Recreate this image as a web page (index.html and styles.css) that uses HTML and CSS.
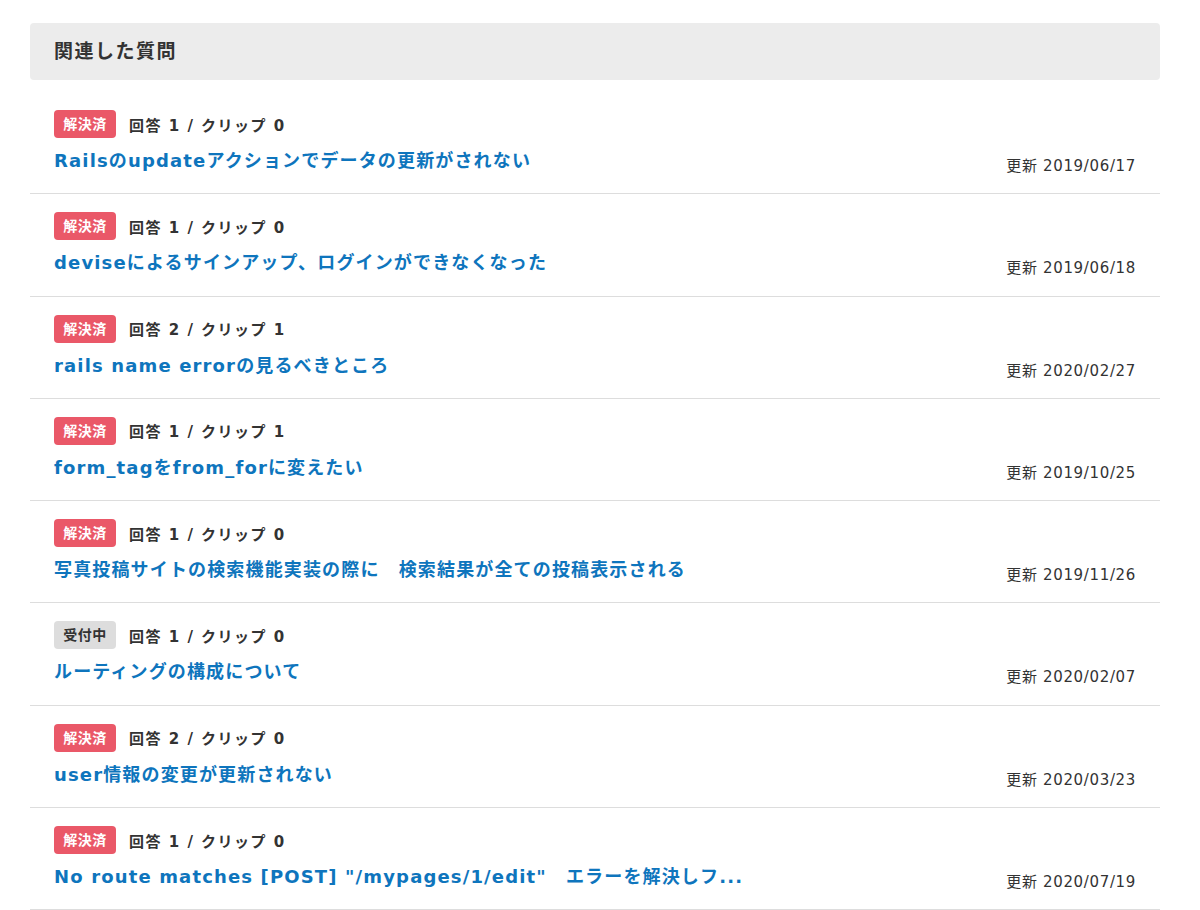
FILE: index.html
```html
<!DOCTYPE html>
<html lang="ja">
<head>
  <meta charset="UTF-8" />
  <meta name="viewport" content="width=device-width, initial-scale=1.0" />
  <title>関連した質問</title>
  <link rel="stylesheet" href="styles.css">
</head>
<body>

<div class="related">
  <h2 class="related-head">関連した質問</h2>

  <ul class="q-list">
    <li class="q-item">
      <div class="q-meta"><span class="badge solved">解決済</span><span class="counts">回答 1 / クリップ 0</span></div>
      <div class="q-row"><a class="q-title" href="#">Railsのupdateアクションでデータの更新がされない</a><span class="q-date">更新 2019/06/17</span></div>
    </li>
    <li class="q-item">
      <div class="q-meta"><span class="badge solved">解決済</span><span class="counts">回答 1 / クリップ 0</span></div>
      <div class="q-row"><a class="q-title" href="#">deviseによるサインアップ、ログインができなくなった</a><span class="q-date">更新 2019/06/18</span></div>
    </li>
    <li class="q-item">
      <div class="q-meta"><span class="badge solved">解決済</span><span class="counts">回答 2 / クリップ 1</span></div>
      <div class="q-row"><a class="q-title" href="#">rails name errorの見るべきところ</a><span class="q-date">更新 2020/02/27</span></div>
    </li>
    <li class="q-item">
      <div class="q-meta"><span class="badge solved">解決済</span><span class="counts">回答 1 / クリップ 1</span></div>
      <div class="q-row"><a class="q-title" href="#">form_tagをfrom_forに変えたい</a><span class="q-date">更新 2019/10/25</span></div>
    </li>
    <li class="q-item">
      <div class="q-meta"><span class="badge solved">解決済</span><span class="counts">回答 1 / クリップ 0</span></div>
      <div class="q-row"><a class="q-title" href="#">写真投稿サイトの検索機能実装の際に　検索結果が全ての投稿表示される</a><span class="q-date">更新 2019/11/26</span></div>
    </li>
    <li class="q-item">
      <div class="q-meta"><span class="badge open">受付中</span><span class="counts">回答 1 / クリップ 0</span></div>
      <div class="q-row"><a class="q-title" href="#">ルーティングの構成について</a><span class="q-date">更新 2020/02/07</span></div>
    </li>
    <li class="q-item">
      <div class="q-meta"><span class="badge solved">解決済</span><span class="counts">回答 2 / クリップ 0</span></div>
      <div class="q-row"><a class="q-title" href="#">user情報の変更が更新されない</a><span class="q-date">更新 2020/03/23</span></div>
    </li>
    <li class="q-item">
      <div class="q-meta"><span class="badge solved">解決済</span><span class="counts">回答 1 / クリップ 0</span></div>
      <div class="q-row"><a class="q-title" href="#">No route matches [POST] "/mypages/1/edit"　エラーを解決しフ...</a><span class="q-date">更新 2020/07/19</span></div>
    </li>
  </ul>
</div>

</body>
</html>
```

FILE: styles.css
```css
html, body {
  margin: 0;
  padding: 0;
  background: #ffffff;
  color: #333333;
  font-family: "DejaVu Sans", "Noto Sans CJK JP", sans-serif;
}

.related {
  width: 1130px;
  margin: 0 0 0 30px;
  padding-top: 23px;
}

.related-head {
  margin: 0 0 12px;
  height: 57px;
  padding: 0 24px;
  background: #ececec;
  border-radius: 4px;
  font-size: 19px;
  font-weight: 700;
  line-height: 57px;
  letter-spacing: 0.08em;
  color: #333333;
}

.q-list {
  list-style: none;
  margin: 0;
  padding: 0;
}

.q-item {
  padding: 18px 24px 20.3px;
  border-bottom: 1px solid #dddddd;
}

.q-meta {
  display: flex;
  align-items: center;
  height: 28px;
}

.badge {
  display: inline-block;
  width: 62px;
  height: 28px;
  line-height: 28px;
  border-radius: 4px;
  text-align: center;
  font-size: 14px;
  font-weight: 700;
  letter-spacing: 0.04em;
}

.badge.solved {
  background: #ea5868;
  color: #ffffff;
}

.badge.open {
  background: #dddddd;
  color: #333333;
}

.counts {
  margin-left: 13px;
  font-size: 15px;
  font-weight: 700;
  letter-spacing: 0.1em;
}

.q-row {
  display: flex;
  justify-content: space-between;
  align-items: flex-end;
  margin-top: 11px;
  height: 24px;
}

.q-title {
  font-size: 18px;
  font-weight: 700;
  line-height: 24px;
  letter-spacing: 1.15px;
  color: #0e75bd;
  text-decoration: none;
  white-space: nowrap;
}

.q-date {
  font-size: 15px;
  line-height: 20px;
  margin-bottom: -3px;
  letter-spacing: 0.65px;
}
```
